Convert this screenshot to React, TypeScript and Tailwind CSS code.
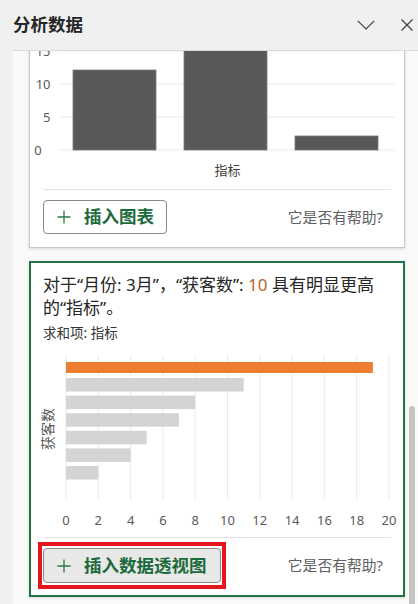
import React from "react";

const FONT = '"Noto Sans", "Noto Sans CJK SC", sans-serif';

function Plus() {
  return (
    <svg width="14" height="14" viewBox="0 0 14 14" className="shrink-0">
      <path d="M7 0.5 V13.5 M0.5 7 H13.5" stroke="#2b7a4b" strokeWidth="1.3" fill="none" />
    </svg>
  );
}

function ColumnChart() {
  const grid = [
    { v: "0", y: 129, x: 8, anchor: "middle" as const },
    { v: "5", y: 96, x: 20.5, anchor: "end" as const },
    { v: "10", y: 63, x: 20.5, anchor: "end" as const },
    { v: "15", y: 30, x: 20.5, anchor: "end" as const },
  ];
  return (
    <svg width="374" height="160" className="block" style={{ fontFamily: FONT }}>
      {grid.map((g) => (
        <g key={g.v}>
          <line x1="30" x2="365" y1={g.y} y2={g.y} stroke="#ececec" strokeWidth="1" />
          <text x={g.x} y={g.y + 4.5} fontSize="13" fill="#595959" textAnchor={g.anchor}>
            {g.v}
          </text>
        </g>
      ))}
      <rect x="43" y="49" width="83" height="80" fill="#595959" stroke="#7a7a7a" strokeWidth="0.8" />
      <rect x="154" y="-10" width="83" height="139" fill="#595959" stroke="#7a7a7a" strokeWidth="0.8" />
      <rect x="265" y="115" width="83" height="14" fill="#595959" stroke="#7a7a7a" strokeWidth="0.8" />
      <text x="197.5" y="154" fontSize="13" fill="#404040" textAnchor="middle">
        指标
      </text>
    </svg>
  );
}

function BarChart() {
  const ticks = [0, 2, 4, 6, 8, 10, 12, 14, 16, 18, 20];
  const s = 16.15;
  const gray = [11, 8, 7, 5, 4, 2];
  return (
    <svg width="372" height="180" className="block" style={{ fontFamily: FONT }}>
      {ticks.map((t) => (
        <g key={t}>
          <line x1={35 + t * s} x2={35 + t * s} y1="5" y2="150" stroke="#ebebeb" strokeWidth="1" />
          <text x={35 + t * s} y="174.5" fontSize="13" fill="#595959" textAnchor="middle">
            {t}
          </text>
        </g>
      ))}
      <rect x="35" y="12" width={19 * s} height="11" fill="#ed7d31" />
      {gray.map((v, i) => (
        <rect key={i} x="35" y={28 + i * 17.6} width={v * s} height="13.5" fill="#d4d4d4" />
      ))}
      <text
        x="16.5"
        y="79"
        fontSize="14"
        fill="#595959"
        textAnchor="middle"
        dominantBaseline="central"
        transform="rotate(-90 16.5 79)"
      >
        获客数
      </text>
    </svg>
  );
}

export default function App() {
  return (
    <div
      className="w-[418px] h-[604px] bg-[#f0f0f0] flex flex-col overflow-hidden text-[#262626]"
      style={{ fontFamily: FONT }}
    >
      <div className="h-[50px] shrink-0 flex items-center justify-between pl-[13px] pr-[5px]">
        <div className="text-[17.5px] font-bold text-[#262626] leading-none">分析数据</div>
        <div className="flex items-center gap-[26px]">
          <svg width="18" height="10" viewBox="0 0 18 10">
            <path d="M0.8 0.8 L9 9 L17.2 0.8" stroke="#404040" strokeWidth="1.2" fill="none" />
          </svg>
          <svg width="12" height="12" viewBox="0 0 12 12">
            <path d="M0.5 0.5 L11.5 11.5 M11.5 0.5 L0.5 11.5" stroke="#404040" strokeWidth="1.2" fill="none" />
          </svg>
        </div>
      </div>

      <div className="relative flex-1 ml-[13px] bg-[#fafafa] border-t border-[#d9d9d9] overflow-hidden pl-4">
        {/* Card 1 (scrolled) */}
        <div className="w-[376px] -mt-[31px] bg-white border border-[#c8c8c8] shadow-[0_1px_3px_rgba(0,0,0,0.15)] pb-[13px]">
          <ColumnChart />
          <div className="mt-[8px] mx-[13px] h-px bg-[#e3e3e3]" />
          <div className="mt-[10px] px-[13px] flex items-center justify-between">
            <button className="h-[34px] flex items-center gap-[13px] pl-[13px] pr-[12px] bg-white border border-[#8a8a8a] rounded-[4px]">
              <Plus />
              <span className="text-[17.5px] font-bold text-[#1b6a3b] leading-none">插入图表</span>
            </button>
            <span className="pr-2 text-[14.8px] text-[#616161]">它是否有帮助?</span>
          </div>
        </div>

        {/* Card 2 */}
        <div className="w-[376px] mt-[13px] bg-white border-2 border-[#217346] shadow-[0_1px_3px_rgba(0,0,0,0.15)] pb-[12px]">
          <div className="pt-[10px] px-[12px] text-[17px] leading-[23px] text-[#262626]">
            <span className="whitespace-nowrap">
              对于“月份: 3月”，“获客数”: <span className="text-[#b4632a]">10</span> 具有明显更高
            </span>
            <br />
            的“指标”。
          </div>
          <div className="mt-[4px] px-[12px] text-[13.5px] leading-[20px] text-[#333333]">求和项: 指标</div>
          <div className="mt-[7px]">
            <BarChart />
          </div>
          <div className="mt-[7px] mx-[12px] h-px bg-[#e3e3e3]" />
          <div className="mt-[10px] px-[12px] flex items-center justify-between">
            <div className="-mx-[5px] -my-[6px] border-4 border-[#e2161c] px-[1px] py-[2px]">
              <button className="h-[35px] flex items-center gap-[13px] pl-[13px] pr-[13px] bg-[#e8e8e8] border border-[#8a8a8a] rounded-[4px]">
                <Plus />
                <span className="text-[17.5px] font-bold text-[#1b6a3b] leading-none">插入数据透视图</span>
              </button>
            </div>
            <span className="pr-2 text-[14.8px] text-[#616161]">它是否有帮助?</span>
          </div>
        </div>

        <div className="absolute right-[3px] top-[355px] w-[6px] h-[260px] rounded-full bg-[#c4c4c4]" />
      </div>
    </div>
  );
}
